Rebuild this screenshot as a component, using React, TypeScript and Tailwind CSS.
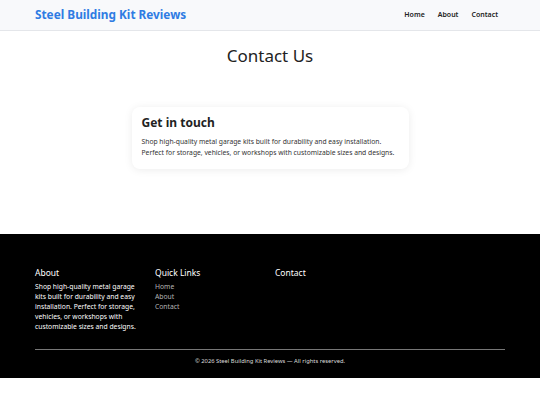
export default function App() {
  return (
    <div className="min-h-[405px] bg-white font-['Noto_Sans',sans-serif]">
      {/* Top bar */}
      <header className="h-[31px] border-b border-[#e4e6ea] bg-[#f8f9fb]">
        <div className="mx-[35px] flex h-full items-center justify-between">
          <a className="text-[11.8px] font-bold text-[#2f7ce3]">Steel Building Kit Reviews</a>
          <nav className="mr-[7px] flex gap-[13px] text-[7px] font-semibold text-[#222]">
            <a>Home</a>
            <a>About</a>
            <a>Contact</a>
          </nav>
        </div>
      </header>

      <main className="h-[203px] pt-[13px]">
        <h1 className="text-center text-[17px] leading-[24px] text-[#222]">Contact Us</h1>
        <div className="mx-auto mt-[39px] w-[277px] rounded-[8px] bg-white pb-[11px] pl-[10px] pr-[12px] pt-[8px] shadow-[0_1px_8px_rgba(0,0,0,0.08)]">
          <h2 className="text-[12px] font-bold leading-[16px] text-[#222]">Get in touch</h2>
          <p className="mt-[5px] text-[6.75px] leading-[11px] text-[#333]">
            Shop high-quality metal garage kits built for durability and easy installation. Perfect for storage, vehicles, or workshops with customizable sizes and designs.
          </p>
        </div>
      </main>

      <footer className="h-[144px] bg-black px-[35px] pt-[32px] text-white">
        <div className="grid grid-cols-[120px_120px_120px_1fr]">
          <div>
            <h3 className="text-[8.5px] leading-[13px]">About</h3>
            <p className="mt-[3px] w-[108px] text-[6.75px] leading-[10px]">
              Shop high-quality metal garage kits built for durability and easy installation. Perfect for storage, vehicles, or workshops with customizable sizes and designs.
            </p>
          </div>
          <div>
            <h3 className="text-[8.5px] leading-[13px]">Quick Links</h3>
            <ul className="mt-[3px] text-[6.75px] leading-[10px] text-[#b5b5b5]">
              <li>Home</li>
              <li>About</li>
              <li>Contact</li>
            </ul>
          </div>
          <div>
            <h3 className="text-[8.5px] leading-[13px]">Contact</h3>
          </div>
          <div />
        </div>
        <div className="mt-[17px] border-t border-[#777]" />
        <p className="mt-[6px] text-center text-[5.8px] leading-[10px] text-[#ddd]">
          © 2026 Steel Building Kit Reviews — All rights reserved.
        </p>
      </footer>
    </div>
  );
}
